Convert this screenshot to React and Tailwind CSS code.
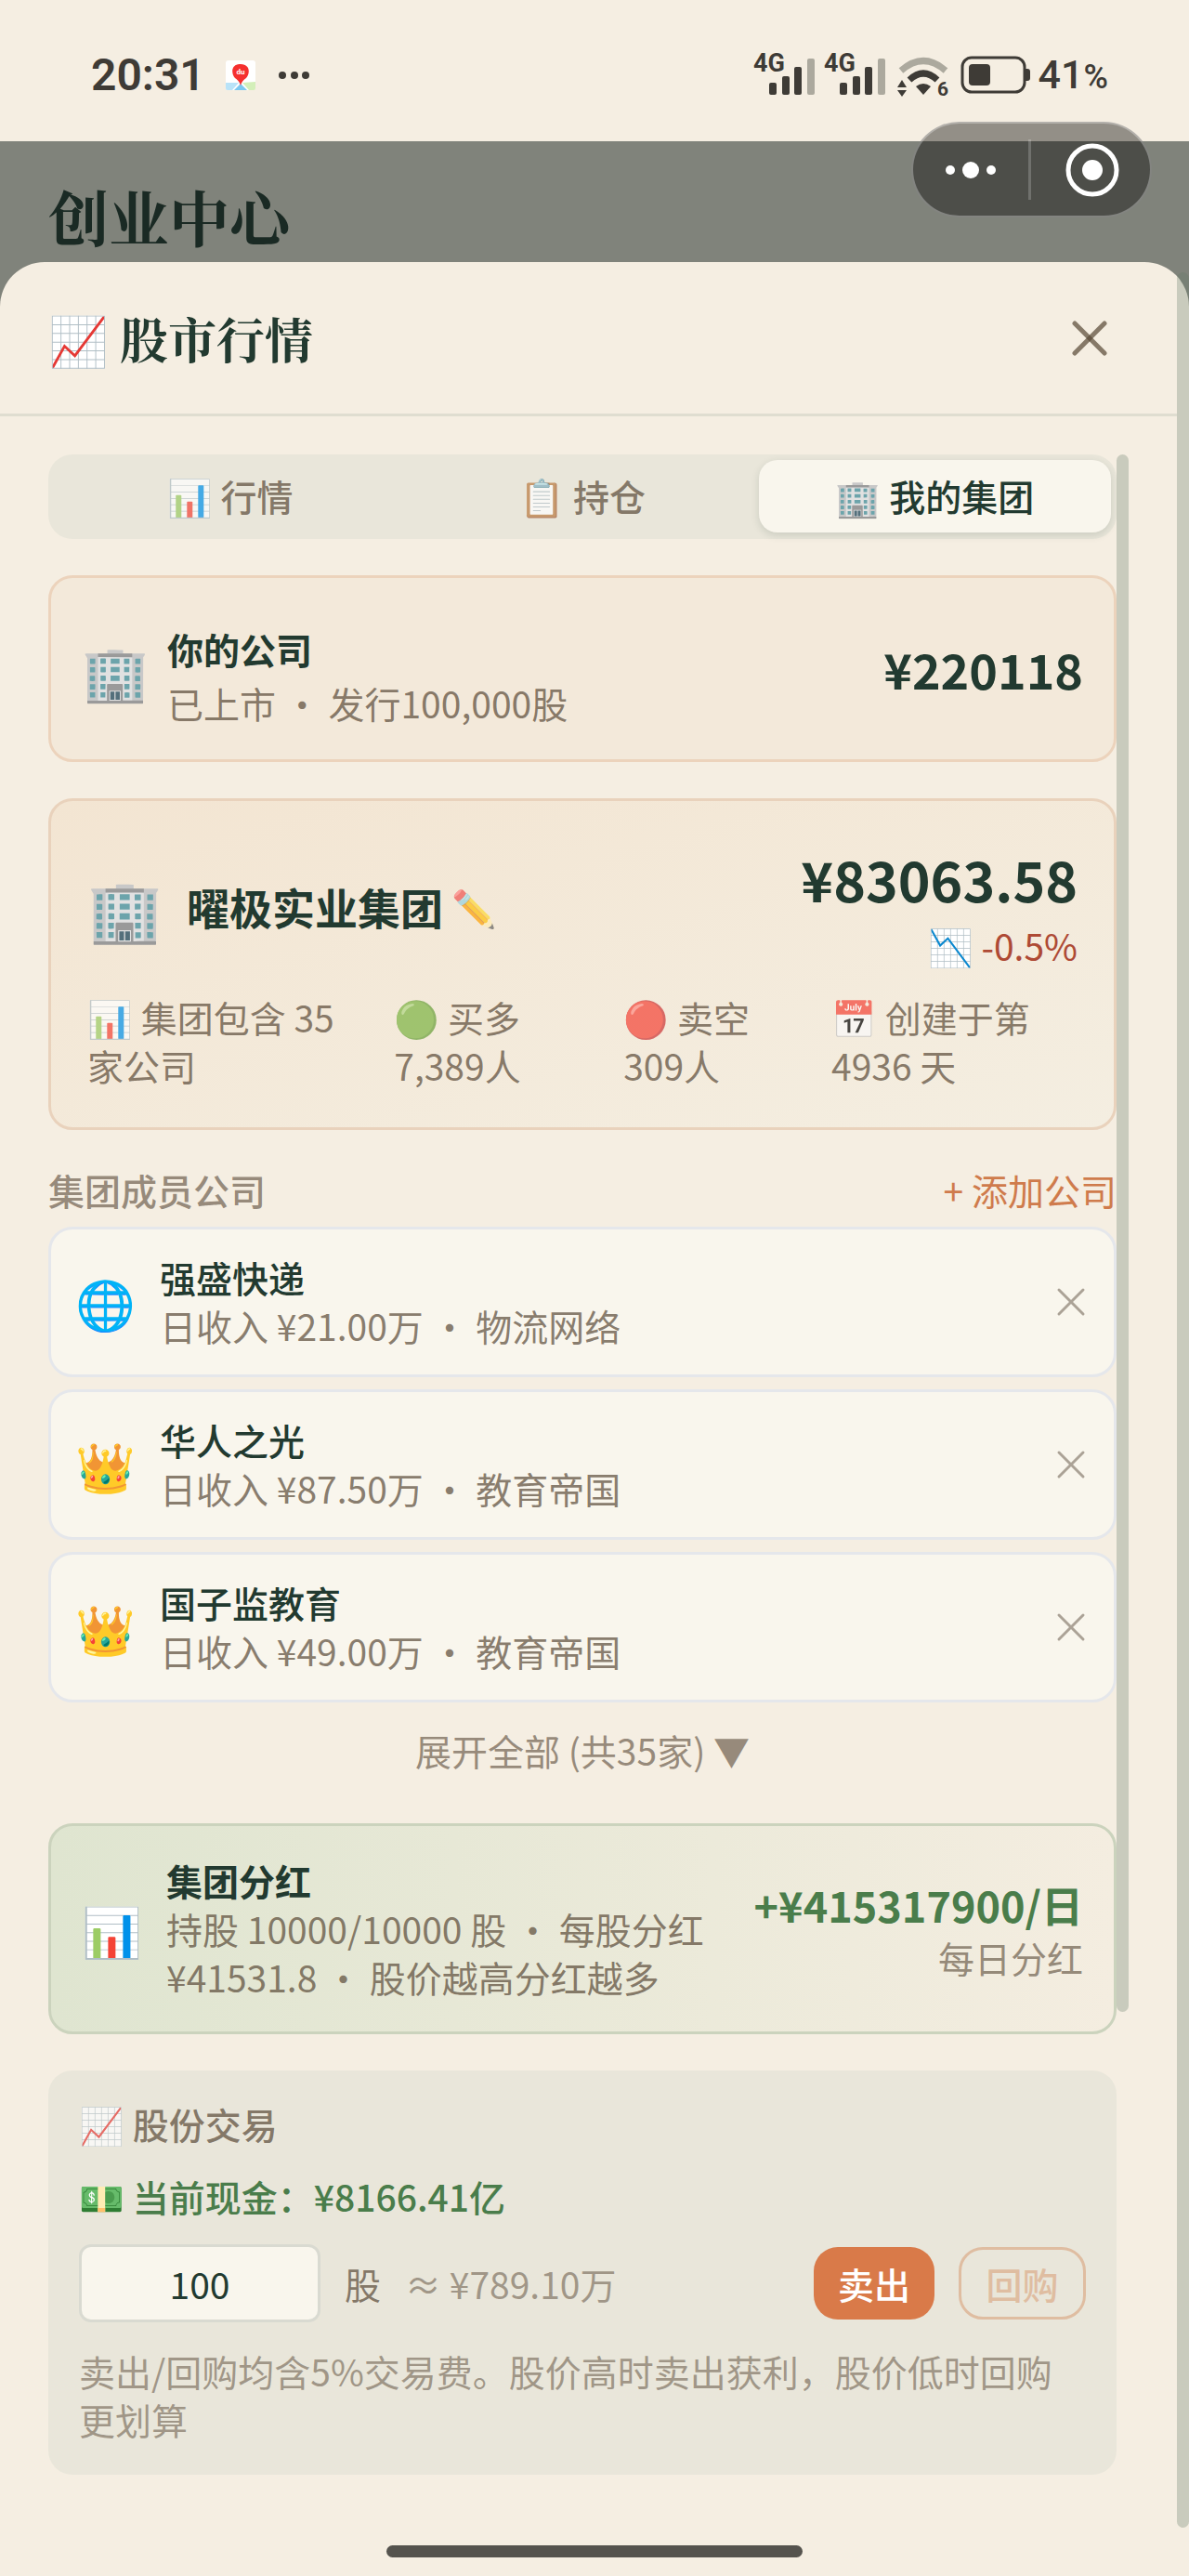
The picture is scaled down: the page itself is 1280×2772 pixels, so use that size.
import React from "react";

const members = [
  { icon: "🌐", name: "强盛快递", income: "¥21.00万", kind: "物流网络" },
  { icon: "👑", name: "华人之光", income: "¥87.50万", kind: "教育帝国" },
  { icon: "👑", name: "国子监教育", income: "¥49.00万", kind: "教育帝国" },
];

const tabs = [
  { icon: "📊", label: "行情" },
  { icon: "📋", label: "持仓" },
  { icon: "🏢", label: "我的集团", active: true },
];

function Signal() {
  return (
    <svg width="72" height="74" viewBox="0 -12 72 74" className="shrink-0">
      <text x="1" y="21" fontSize="27" fontWeight="700" fontFamily="Roboto, sans-serif" fill="#3e3b36">4G</text>
      <g fill="#3e3b36">
        <rect x="18" y="33" width="8" height="13" rx="2" />
        <rect x="32" y="26" width="8" height="20" rx="2" />
        <rect x="45" y="16" width="8" height="30" rx="2" />
      </g>
      <rect x="59" y="7" width="8" height="39" rx="2" fill="#aca99e" />
    </svg>
  );
}

function Wifi() {
  return (
    <svg width="60" height="74" viewBox="0 -12 60 74" className="shrink-0">
      <path d="M4 20 Q28 -1 52 20" fill="none" stroke="#aca99e" strokeWidth="7" />
      <path d="M13 30 Q28 16 43 30" fill="none" stroke="#3e3b36" strokeWidth="7" />
      <path d="M20 37 Q28 31 36 37 L28 46 Z" fill="#3e3b36" />
      <path d="M0 38 L5 30 L10 38 Z M0 41 L5 48 L10 41 Z" fill="#3e3b36" />
      <text x="43" y="47" fontSize="21" fontWeight="700" fontFamily="Roboto, sans-serif" fill="#3e3b36">6</text>
    </svg>
  );
}

function Battery() {
  return (
    <svg width="76" height="50" viewBox="0 0 76 50" className="shrink-0">
      <rect x="2" y="6" width="67" height="37" rx="10" fill="none" stroke="#3e3b36" strokeWidth="3" />
      <rect x="9" y="13" width="23" height="23" rx="4" fill="#3e3b36" />
      <path d="M70 18 h2 q3 0 3 3 v7 q0 3 -3 3 h-2 Z" fill="#3e3b36" />
    </svg>
  );
}

function MapIcon() {
  return (
    <svg width="32" height="32" viewBox="0 0 32 32" className="shrink-0">
      <rect width="32" height="32" rx="3" fill="#fff" />
      <path d="M0 24 L14 24 L7 32 L2 32 Q0 32 0 30 Z" fill="#b9e3f8" />
      <path d="M18 24 L32 23 L32 30 Q32 32 30 32 L25 32 Z" fill="#d3efb9" />
      <path d="M16 25 L23 32 L9 32 Z" fill="#7cc8f0" />
      <path d="M16 4 C5 4 6 15 10 19 C14 22 15 24 16 27 C17 24 18 22 22 19 C26 15 27 4 16 4 Z" fill="#f5302f" />
      <text x="16" y="15" fontSize="8" fontWeight="700" textAnchor="middle" fontFamily="Roboto, sans-serif" fill="#fff">du</text>
    </svg>
  );
}

function Cross({ size, width, className }) {
  return (
    <svg width={size} height={size} viewBox={`0 0 ${size} ${size}`} className={className} fill="none" stroke="currentColor" strokeWidth={width} strokeLinecap="round">
      <path d={`M3 3 L${size - 3} ${size - 3}`} />
      <path d={`M${size - 3} 3 L3 ${size - 3}`} />
    </svg>
  );
}

export default function App() {
  return (
    <div className="relative flex min-h-screen flex-col bg-[#f5eee2] font-['Noto_Sans_CJK_SC',sans-serif] text-[39px] leading-[52px] text-[#223a30]">
      <div className="flex h-[152px] items-center justify-between pt-[10px] pr-[87px] pl-[98px] font-[Roboto,sans-serif] text-[#3e3b36]">
        <div className="flex items-center">
          <span className="text-[48px] font-semibold">20:31</span>
          <span className="ml-[22px]"><MapIcon /></span>
          <svg width="34" height="10" viewBox="0 0 34 10" className="ml-6" fill="#3e3b36">
            <circle cx="5" cy="5" r="4" />
            <circle cx="18" cy="5" r="4" />
            <circle cx="30" cy="5" r="4" />
          </svg>
        </div>
        <div className="flex items-center">
          <span className="flex gap-1 pr-2">
            <Signal />
            <Signal />
          </span>
          <Wifi />
          <span className="ml-2"><Battery /></span>
          <span className="ml-2 text-[43px] font-medium">41<span className="text-[36px]">%</span></span>
        </div>
      </div>

      <div className="absolute top-[131px] right-10 z-10 flex h-[103px] w-[259px] items-center rounded-full border-2 border-white/30 bg-black/40">
        <button type="button" aria-label="更多" className="flex flex-1 items-center justify-center">
          <svg width="56" height="24" viewBox="0 0 56 24" fill="#fff">
            <circle cx="6" cy="12" r="5" />
            <circle cx="28" cy="12" r="9" />
            <circle cx="50" cy="12" r="5" />
          </svg>
        </button>
        <span className="h-[65px] w-[3px] bg-white/20" />
        <button type="button" aria-label="关闭小程序" className="flex flex-1 items-center justify-center pl-1">
          <svg width="58" height="58" viewBox="0 0 58 58">
            <circle cx="29" cy="29" r="26" fill="none" stroke="#fff" strokeWidth="5" />
            <circle cx="29" cy="29" r="11" fill="#fff" />
          </svg>
        </button>
      </div>

      <main className="flex flex-1 flex-col bg-[#80837b]">
        <h1 className="h-[130px] pt-[34px] pl-[52px] font-['Noto_Serif_CJK_SC','Noto_Sans_CJK_SC',serif] text-[65px] leading-[92px] font-bold text-[#1a2a24]">创业中心</h1>

        <section className="relative flex flex-1 flex-col rounded-t-[48px] bg-[#f5eee2] pr-[13px]">
          <span className="absolute top-[11px] right-0 bottom-[52px] w-[13px] rounded-full bg-[#627967]/30" />

          <header className="flex h-[166px] items-center justify-between border-b-[3px] border-[#dfddd0] pr-[52px] pl-[52px]">
            <h2 className="flex items-center gap-3 font-['Noto_Serif_CJK_SC','Noto_Sans_CJK_SC',serif] text-[52px] leading-[70px] font-bold">
              <span>📈</span>
              <span>股市行情</span>
            </h2>
            <button type="button" aria-label="关闭" className="flex size-[84px] items-center justify-center text-[#574735]/70">
              <Cross size={38} width={5} />
            </button>
          </header>

          <div className="relative mx-[52px] mt-[41px] flex flex-col pr-[13px]">
            <span className="absolute top-0 right-0 h-[1676px] w-[13px] rounded-full bg-[#627967]/30" />

            <nav className="flex h-[91px] rounded-[26px] bg-[#e9e6da] p-[6px]">
              {tabs.map((t) => (
                <button
                  key={t.label}
                  type="button"
                  className={
                    t.active
                      ? "h-[78px] flex-1 rounded-[20px] bg-[#f9f6ed] pb-[2px] font-medium shadow-[0_3px_9px_rgba(34,58,48,0.15)]"
                      : "h-[78px] flex-1 pb-[2px] font-medium text-[#574735]/70"
                  }
                >
                  {t.icon} {t.label}
                </button>
              ))}
            </nav>

            <div className="mt-[39px] flex h-[201px] items-center rounded-[26px] border-[3px] border-[#ecd3bc] bg-[#f3e9da] px-[33px]">
              <span className="text-[58px] leading-[78px]">🏢</span>
              <div className="ml-5 flex flex-1 flex-col gap-[6px] pt-[14px]">
                <h3 className="font-bold">你的公司</h3>
                <p className="text-[#574735]/70">已上市 • 发行100,000股</p>
              </div>
              <strong className="text-[52px] leading-[70px]">¥220118</strong>
            </div>

            <div className="mt-[39px] rounded-[26px] border-[3px] border-[#e9d2bc] bg-linear-to-br from-[#f3e5d2] to-[#f4eee1] px-[39px] pt-[45px] pb-[41px]">
              <div className="flex items-center">
                <span className="text-[65px] leading-[80px]">🏢</span>
                <h3 className="ml-[26px] text-[46px] leading-[60px] font-bold">曜极实业集团</h3>
                <button type="button" aria-label="编辑名称" className="ml-[9px] text-[#574735]/70">✏️</button>
                <div className="ml-auto text-right">
                  <strong className="block text-[59px] leading-[78px]">¥83063.58</strong>
                  <span className="mt-[6px] block text-[#ae4a35]">📉 -0.5%</span>
                </div>
              </div>
              <div className="mt-[25px] grid grid-cols-[329fr_246fr_223fr_264fr] text-[#574735]/70">
                <p>📊 集团包含 35<br />家公司</p>
                <p>🟢 买多<br />7,389人</p>
                <p>🔴 卖空<br />309人</p>
                <p>📅 创建于第<br />4936 天</p>
              </div>
            </div>

            <div className="mt-[38px] mb-[14px] flex items-center justify-between">
              <h3 className="font-medium text-[#574735]/60">集团成员公司</h3>
              <button type="button" className="text-[#cf7b4c]">+ 添加公司</button>
            </div>

            <ul className="flex flex-col gap-[13px]">
              {members.map((m) => (
                <li key={m.name} className="flex h-[162px] items-center rounded-[26px] border-[3px] border-[#e5e7eb] bg-[#f9f6ed] px-[26px]">
                  <span className="text-[52px] leading-[70px]">{m.icon}</span>
                  <div className="ml-[26px] flex-1 pb-[2px]">
                    <h4 className="font-medium">{m.name}</h4>
                    <p className="text-[#574735]/70">日收入 {m.income} • {m.kind}</p>
                  </div>
                  <button type="button" aria-label={`移除${m.name}`} className="flex h-12 w-10 items-center justify-center text-[#aba296]">
                    <Cross size={32} width={3} />
                  </button>
                </li>
              ))}
            </ul>

            <button type="button" className="mt-[13px] h-[78px] pb-[2px] text-[#574735]/60">展开全部 (共35家) ▼</button>

            <div className="mt-[39px] flex h-[227px] items-center rounded-[26px] border-[3px] border-[#cbd3bd] bg-linear-to-r from-[#dfe5d0] to-[#f4ede0] px-[33px]">
              <span className="text-[52px] leading-[70px]">📊</span>
              <div className="ml-[26px] flex-1 pb-[2px]">
                <h3 className="font-bold">集团分红</h3>
                <p className="text-[#574735]/70">持股 10000/10000 股 • 每股分红<br />¥41531.8 • 股价越高分红越多</p>
              </div>
              <div className="text-right">
                <strong className="block text-[45px] leading-[60px] text-[#4a7d4b]">+¥415317900/日</strong>
                <span className="block text-[#574735]/60">每日分红</span>
              </div>
            </div>

            <div className="mt-[39px] flex flex-col rounded-[26px] bg-[#e9e6da] px-[33px] pt-[31px] pb-[34px]">
              <h3 className="font-medium text-[#574735]/70">📈 股份交易</h3>
              <p className="mt-[26px] font-medium text-[#4a7d4b]">💵 当前现金：¥8166.41亿</p>
              <div className="mt-[26px] flex items-center">
                <input id="shares" type="text" defaultValue="100" className="h-[84px] w-[260px] rounded-[13px] border-[3px] border-[#d9dad1] bg-[#f9f6ed] text-center" />
                <label htmlFor="shares" className="ml-[26px] text-[#574735]/70">股</label>
                <span className="ml-[26px] text-[#574735]/50">≈ ¥789.10万</span>
                <button type="button" className="ml-auto h-[78px] w-[130px] rounded-[26px] bg-[#d97a49] font-medium text-white">卖出</button>
                <button type="button" disabled className="ml-[26px] h-[78px] w-[137px] rounded-[26px] border-[3px] border-[#dfbda1] font-medium text-[#dfbda1]">回购</button>
              </div>
              <p className="mt-[26px] text-[#574735]/50">卖出/回购均含5%交易费。股价高时卖出获利，股价低时回购更划算</p>
            </div>
          </div>

          <div className="mt-auto flex justify-center pt-[60px] pb-5 pl-[13px]">
            <span className="h-[13px] w-[448px] rounded-full bg-[#55534e]" />
          </div>
        </section>
      </main>
    </div>
  );
}
